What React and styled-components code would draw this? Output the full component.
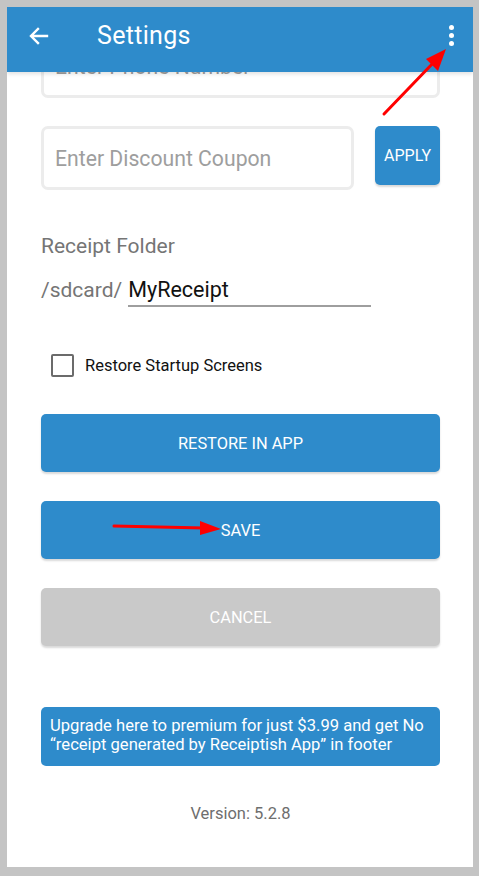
import React from 'react';
import styled, { createGlobalStyle } from 'styled-components';

const GlobalStyle = createGlobalStyle`
  html, body {
    margin: 0;
    padding: 0;
    background: #c4c4c4;
  }
  * {
    box-sizing: border-box;
  }
`;

const blue = '#2e8bcb';

const Frame = styled.div`
  width: 479px;
  height: 876px;
  padding: 7px 6px 9px 7px;
  background: #c4c4c4;
  font-family: Roboto, "Liberation Sans", sans-serif;
`;

const Screen = styled.div`
  position: relative;
  height: 100%;
  background: #fff;
  overflow: hidden;
  display: flex;
  flex-direction: column;
`;

const Toolbar = styled.header`
  position: relative;
  z-index: 2;
  height: 65px;
  flex-shrink: 0;
  background: ${blue};
  display: flex;
  align-items: center;
  padding: 0 19px 8px 20px;
  color: #fff;
  box-shadow: 0 2px 4px rgba(0, 0, 0, 0.12);
`;

const BackButton = styled.svg`
  width: 24px;
  height: 24px;
  margin-right: 46px;
`;

const Title = styled.h1`
  flex: 1;
  margin: 0;
  font-size: 25px;
  font-weight: 400;
  letter-spacing: 0.3px;
`;

const Kebab = styled.div`
  display: flex;
  flex-direction: column;
  gap: 3px;
  span {
    width: 5px;
    height: 5px;
    border-radius: 50%;
    background: #fff;
  }
`;

const Content = styled.div`
  display: flex;
  flex-direction: column;
  padding: 0 33px 0 34px;
  margin-top: -38px;
`;

const Field = styled.div`
  height: 64px;
  flex: ${p => (p.$grow ? 1 : 'none')};
  border: 3px solid #ececec;
  border-radius: 7px;
  display: flex;
  align-items: center;
  padding-left: 11px;
  font-size: 21.2px;
  color: #9e9e9e;
  background: #fff;
`;

const CouponRow = styled.div`
  display: flex;
  gap: 21px;
  margin-top: 28px;
`;

const ApplyButton = styled.div`
  width: 65px;
  height: 59px;
  background: ${blue};
  border-radius: 5px;
  color: #fff;
  font-size: 16px;
  display: flex;
  align-items: center;
  justify-content: center;
  box-shadow: 0 2px 2px rgba(0, 0, 0, 0.15);
`;

const Label = styled.div`
  margin-top: 44px;
  font-size: 21px;
  color: #757575;
  line-height: 24px;
`;

const FolderRow = styled.div`
  display: flex;
  align-items: flex-end;
  margin-top: 20px;
  font-size: 21px;
  line-height: 24px;
  color: #757575;
`;

const FolderInput = styled.div`
  width: 243px;
  margin-left: 6px;
  color: #111;
  font-size: 21.5px;
  padding-bottom: 3px;
  border-bottom: 2px solid #9e9e9e;
  margin-bottom: -5px;
`;

const CheckRow = styled.div`
  display: flex;
  align-items: center;
  gap: 11px;
  margin-top: 52px;
  padding-left: 10px;
  font-size: 16.5px;
  color: #111;
`;

const Box = styled.span`
  width: 23px;
  height: 23px;
  border: 2px solid #6b6b6b;
  border-radius: 2px;
`;

const Button = styled.div`
  height: 58px;
  margin-top: ${p => p.$top}px;
  border-radius: 5px;
  background: ${p => (p.$muted ? '#c9c9c9' : blue)};
  color: #fff;
  font-size: 16.4px;
  display: flex;
  align-items: center;
  justify-content: center;
  box-shadow: 0 2px 2px rgba(0, 0, 0, 0.15);
`;

const Promo = styled.div`
  margin-top: 61px;
  height: 59px;
  border-radius: 5px;
  background: ${blue};
  color: #fff;
  font-size: 16.6px;
  line-height: 19px;
  padding: 9px 8px 0 9px;
`;

const Version = styled.div`
  margin-top: 38px;
  text-align: center;
  color: #6e6e6e;
  font-size: 16.5px;
`;

const Annotations = styled.svg`
  position: absolute;
  left: -7px;
  top: -7px;
  width: 479px;
  height: 876px;
  pointer-events: none;
  z-index: 3;
`;

export default function App() {
  return (
    <Frame>
      <GlobalStyle />
      <Screen>
        <Toolbar>
          <BackButton viewBox="0 0 24 24">
            <path d="M20 12H5M11 5l-7 7 7 7" fill="none" stroke="#fff" strokeWidth="2.4" strokeLinecap="square" />
          </BackButton>
          <Title>Settings</Title>
          <Kebab>
            <span />
            <span />
            <span />
          </Kebab>
        </Toolbar>
        <Content>
          <Field>Enter Phone Number</Field>
          <CouponRow>
            <Field $grow>Enter Discount Coupon</Field>
            <ApplyButton>APPLY</ApplyButton>
          </CouponRow>
          <Label>Receipt Folder</Label>
          <FolderRow>
            /sdcard/
            <FolderInput>MyReceipt</FolderInput>
          </FolderRow>
          <CheckRow>
            <Box />
            Restore Startup Screens
          </CheckRow>
          <Button $top={37}>RESTORE IN APP</Button>
          <Button $top={29}>SAVE</Button>
          <Button $top={29} $muted>CANCEL</Button>
          <Promo>
            Upgrade here to premium for just $3.99 and get No “receipt generated by Receiptish App” in footer
          </Promo>
          <Version>Version: 5.2.8</Version>
        </Content>
        <Annotations viewBox="0 0 479 876">
          <line x1="384" y1="114" x2="435" y2="61" stroke="#f00" strokeWidth="3" strokeLinecap="round" />
          <polygon points="446,49 438,71 426,59" fill="#f00" />
          <line x1="114" y1="526" x2="204" y2="528" stroke="#f00" strokeWidth="3" strokeLinecap="round" />
          <polygon points="221,529 200,521 200,535" fill="#f00" />
        </Annotations>
      </Screen>
    </Frame>
  );
}
